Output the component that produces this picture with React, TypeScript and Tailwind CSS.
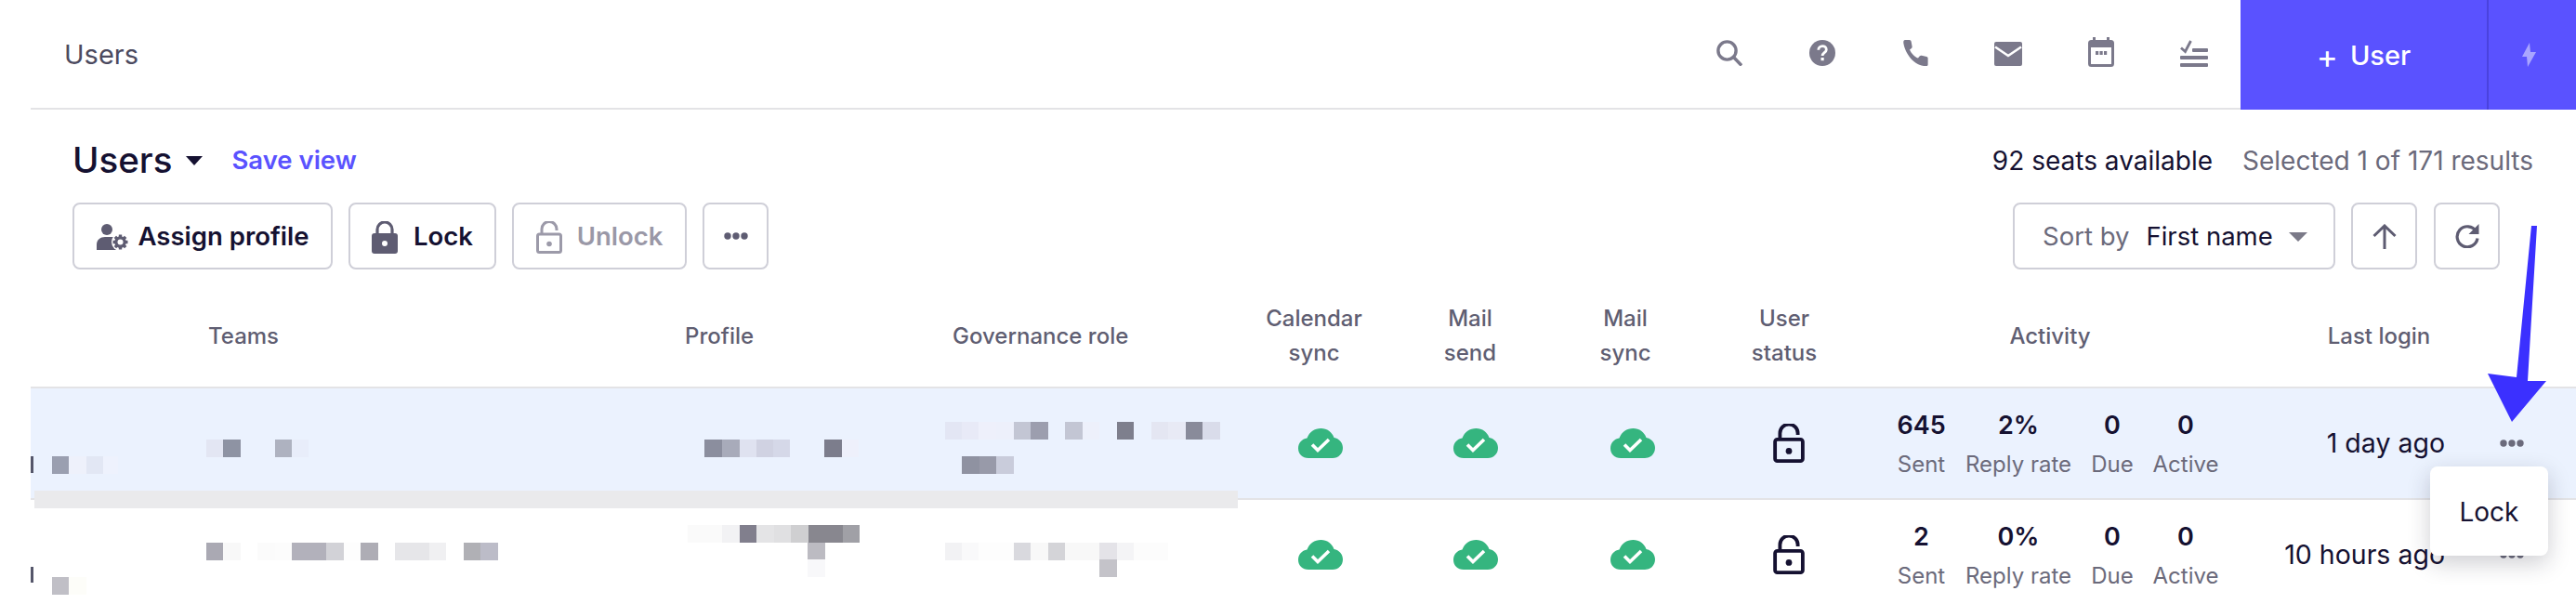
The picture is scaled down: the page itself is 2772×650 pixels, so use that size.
import React from 'react';

type Cell = [number, string];
type Strip = { x: number; y: number; cells: Cell[] };

// blurred-out values, drawn as mosaic strips: [width, colour], transparent = gap
const Mosaic: React.FC<{ strips: Strip[] }> = ({ strips }) => (
  <>
    {strips.map((s, i) => (
      <div key={i} className="absolute flex h-[18.5px]" style={{ left: s.x, top: s.y }}>
        {s.cells.map(([w, c], j) => (
          <div key={j} className="h-full" style={{ width: w, background: c }} />
        ))}
      </div>
    ))}
  </>
);

const row1Strips: Strip[] = [
  { x: 33, y: 491, cells: [[23, 'transparent'], [18, '#9a9fb0'], [19, '#eef1fb'], [18, '#e2e7f4'], [16, '#eef2fd']] },
  { x: 222, y: 473, cells: [[18, '#e3e6f3'], [19, '#8e93a3'], [37, 'transparent'], [18, '#aeb2c0'], [18, '#e8edfa']] },
  { x: 758, y: 473, cells: [[19, '#8b8e9e'], [19, '#a8abba'], [18, '#dfe2f0'], [18, '#d0d2e2'], [18, '#d5d8e8'], [37, 'transparent'], [19, '#7c7d8c'], [18, '#eef0fb']] },
  { x: 1017, y: 454, cells: [[18, '#e3e6f4'], [18, '#e8eaf7'], [19, '#eef0fb'], [19, '#edf0fb'], [18, '#c3c6d4'], [19, '#9c9eae'], [18, 'transparent'], [19, '#c3c6d4'], [18, '#edf0fb'], [19, 'transparent'], [18, '#7e7f8d'], [19, 'transparent'], [18, '#e4e6f2'], [19, '#e8eaf5'], [18, '#898b9a'], [19, '#d9dcea']] },
  { x: 1035, y: 491, cells: [[19, '#8f92a1'], [18, '#989aa9'], [19, '#c9ccdb']] },
];

const row2Strips: Strip[] = [
  { x: 33, y: 621, cells: [[23, 'transparent'], [18, '#c0bfc6'], [19, '#fdfdf9']] },
  { x: 222, y: 584, cells: [[18, '#aaa9b3'], [19, '#f8f8f8'], [18, 'transparent'], [19, '#fbfbfb'], [18, '#fcfcfc'], [37, '#b2b1bb'], [19, '#d2d2d7'], [18, '#fdfdfd'], [19, '#aeadb5'], [18, 'transparent'], [37, '#e6e6e9'], [18, '#f0f0f2'], [19, 'transparent'], [18, '#b0b0b5'], [19, '#bcbcc8']] },
  { x: 740, y: 565, cells: [[37, '#fafafa'], [19, '#f2f2f4'], [18, '#817f8d'], [19, '#e4e4e6'], [18, '#e0e0e2'], [19, '#cfcfd1'], [37, '#88878f'], [18, '#a0a0a6']] },
  { x: 869, y: 584, cells: [[19, '#bcbbc2']] },
  { x: 869, y: 602, cells: [[19, '#f8f8fa']] },
  { x: 1017, y: 584, cells: [[18, '#f2f2f4'], [18, '#f9f9fa'], [38, '#fdfdfd'], [18, '#d9d9de'], [19, '#f8f8f8'], [18, '#d4d4d8'], [37, '#f8f8f8'], [19, '#e4e3e8'], [18, '#f4f4f6'], [37, '#fcfcfc']] },
  { x: 1183, y: 602, cells: [[19, '#c4c3c9']] },
];

const SearchIcon = () => (
  <svg width="28" height="28" viewBox="0 0 28 28" fill="none" stroke="#7b798b" strokeWidth="3.4">
    <circle cx="11.5" cy="11.5" r="9.6" />
    <path d="M18.5 18.5 27 27.5" />
  </svg>
);

const HelpIcon = () => (
  <svg width="28" height="28" viewBox="0 0 28 28" fill="none">
    <circle cx="14" cy="14" r="14" fill="#7b798b" />
    <path d="M9.8 10.8c0-2.6 1.9-4.2 4.3-4.2s4.2 1.5 4.2 3.8c0 3.2-4.2 3.4-4.2 6.6" stroke="#fff" strokeWidth="2.8" />
    <rect x="12.5" y="19" width="3.2" height="3.2" fill="#fff" />
  </svg>
);

const PhoneIcon = () => (
  <svg width="28" height="28" viewBox="0 0 28 28" fill="#7b798b">
    <path d="M3 0h4.6c1.3 0 1.9.8 2.1 2l.9 5c.2 1-.2 1.6-1 2.2L8 10.4c1.5 3.6 5 7.6 9 9.2l1.6-2c.7-.8 1.4-1 2.3-.8l5.2 1.2c1.2.3 1.5 1 1.5 2.1V26.500c0 1-.8 1.500-1.800 1.500C12 28 3 14 1.300 3.200 1.100 1.200 1.800 0 3 0z" />
  </svg>
);

const MailIcon = () => (
  <svg width="30" height="26" viewBox="0 0 30 26" fill="none">
    <rect width="30" height="26" rx="2" fill="#7b798b" />
    <path d="M1 5.500 15 15 29 5.500" stroke="#fff" strokeWidth="2.600" />
  </svg>
);

const CalendarIcon = () => (
  <svg width="28" height="32" viewBox="0 0 28 32" fill="none">
    <rect x="1.500" y="4.500" width="25" height="26" rx="2" stroke="#7b798b" strokeWidth="3" />
    <rect x="1" y="4" width="26" height="7" fill="#7b798b" />
    <rect x="5" y="0" width="3" height="6" fill="#7b798b" />
    <rect x="20" y="0" width="3" height="6" fill="#7b798b" />
    <rect x="8" y="15" width="3.200" height="4" fill="#7b798b" />
    <rect x="12.500" y="15" width="3.200" height="4" fill="#7b798b" />
    <rect x="17" y="15" width="3.200" height="4" fill="#7b798b" />
  </svg>
);

const TasksIcon = () => (
  <svg width="30" height="29" viewBox="0 0 30 29" fill="none">
    <path d="M1 8.500 5.500 12.500 11.500 1" stroke="#7b798b" strokeWidth="2.800" />
    <rect x="13" y="9" width="17" height="4" rx="1" fill="#7b798b" />
    <rect y="17" width="30" height="4" rx="1" fill="#7b798b" />
    <rect y="25" width="30" height="4" rx="1" fill="#7b798b" />
  </svg>
);

const BoltIcon = () => (
  <svg width="15" height="26" viewBox="0 0 15 26">
    <path d="M8 0 0 15h5l1 11 9-16H9z" fill="#a9a5ff" />
  </svg>
);

const AssignProfileIcon = () => (
  <svg width="35" height="28" viewBox="0 0 35 28" fill="#5e5c72">
    <circle cx="11" cy="6" r="6" />
    <path d="M0 28v-6c0-5 4-8 9-8h6c4 0 7 2 8 5v9z" />
    <circle cx="25.500" cy="19.500" r="9.500" fill="#fff" />
    {[0, 45, 90, 135].map(a => (
      <rect key={a} x="23.800" y="11.500" width="3.400" height="16" transform={`rotate(${a} 25.500 19.500)`} />
    ))}
    <circle cx="25.500" cy="19.500" r="5" fill="none" stroke="#5e5c72" strokeWidth="2.600" />
    <circle cx="25.500" cy="19.500" r="3" fill="#fff" />
  </svg>
);

const LockClosedIcon = () => (
  <svg width="28" height="35" viewBox="0 0 28 35" fill="none">
    <path d="M6 15V9a8 8 0 0 1 16 0v6" stroke="#5e5c72" strokeWidth="3.200" />
    <rect y="13" width="28" height="22" rx="3" fill="#5e5c72" />
    <circle cx="14" cy="24" r="3" fill="#fff" />
  </svg>
);

const LockOpenIcon: React.FC<{ color: string; w: number; h: number; sw: number }> = ({ color, w, h, sw }) => (
  <svg width={w} height={h} viewBox="0 0 28 35" fill="none">
    <path d="M6 13V8.500a8 8 0 0 1 16 0V10" stroke={color} strokeWidth={sw} />
    <rect x={sw / 2} y="14" width={28 - sw} height={21 - sw / 2} rx="2" stroke={color} strokeWidth={sw} />
    <circle cx="14" cy="24.500" r="2.800" fill={color} />
  </svg>
);

const Dots: React.FC<{ color: string }> = ({ color }) => (
  <svg width="26" height="8" viewBox="0 0 26 8" fill={color}>
    <circle cx="4" cy="4" r="3.700" />
    <circle cx="13" cy="4" r="3.700" />
    <circle cx="22" cy="4" r="3.700" />
  </svg>
);

const CloudCheck = () => (
  <svg width="48" height="32" viewBox="0 0 48 32">
    <path d="M11 32C4.500 32 0 27.500 0 21.500 0 16 3.800 11.500 9.500 10.500 12 4 17.500 0 24.500 0 31 0 36.500 4 38.500 10c5.500 1 9.500 5.500 9.500 11 0 6.300-4.700 11-11 11z" fill="#35b57f" />
    <path d="M15 17.500 21 23.500 33 12" fill="none" stroke="#fff" strokeWidth="3.600" />
  </svg>
);

const UpArrowIcon = () => (
  <svg width="26" height="27" viewBox="0 0 26 27" fill="none" stroke="#5e5c72" strokeWidth="3">
    <path d="M13 27V2M1.500 13 13 2l11.500 11" />
  </svg>
);

const RefreshIcon = () => (
  <svg width="28" height="26" viewBox="0 0 28 26" fill="none">
    <path d="M23.500 8A11 11 0 1 0 25 15.500" stroke="#5e5c72" strokeWidth="3.200" />
    <path d="M26.500 0v11h-11z" fill="#5e5c72" />
  </svg>
);

const ToolButton: React.FC<{ className: string; children: React.ReactNode }> = ({ className, children }) => (
  <button className={`flex h-[72px] items-center rounded-lg border-2 border-[#cfcfd8] bg-white ${className}`}>
    {children}
  </button>
);

const Stat: React.FC<{ value: string; label: string; w: string }> = ({ value, label, w }) => (
  <div className={`flex flex-col items-center gap-[15px] pt-[3px] ${w}`}>
    <span className="text-[27px] leading-[27px] font-semibold text-[#151131]">{value}</span>
    <span className="text-[24px] leading-[27px] whitespace-nowrap text-[#6b6a7b]">{label}</span>
  </div>
);

const UserRow: React.FC<{ stats: string[]; login: string; selected?: boolean }> = ({ stats, login, selected }) => (
  <div className={`grid h-[118px] grid-cols-[1305px_166px_168px_170px_166px_392px_231px_1fr] items-center ${selected ? 'bg-[#ebf2fe]' : 'bg-white'}`}>
    <div />
    <div className="flex justify-center"><CloudCheck /></div>
    <div className="flex justify-center"><CloudCheck /></div>
    <div className="flex justify-center"><CloudCheck /></div>
    <div className="flex justify-center"><LockOpenIcon color="#151131" w={34} h={42} sw={3.2} /></div>
    <div className="flex gap-[22px] pl-[34px]">
      <Stat value={stats[0]} label="Sent" w="w-[51px]" />
      <Stat value={stats[1]} label="Reply rate" w="w-[114px]" />
      <Stat value={stats[2]} label="Due" w="w-[44px]" />
      <Stat value={stats[3]} label="Active" w="w-[70px]" />
    </div>
    <div className="text-right text-[28.5px] whitespace-nowrap text-[#151131]">{login}</div>
    <div className="pl-[59px]"><Dots color="#6b6a7b" /></div>
  </div>
);

export default function App() {
  return (
    <div className="relative h-[650px] w-[2772px] overflow-hidden bg-white font-['Inter',sans-serif]">
      {/* top bar */}
      <div className="flex h-[118px] pl-[33px]">
        <div className="flex flex-1 items-center justify-between border-b-2 border-[#e3e3e6] pl-[36px]">
          <span className="pt-[2px] text-[29px] text-[#4c4a5f]">Users</span>
          <div className="flex self-start pt-[40px]">
            <div className="flex w-[100px] justify-center pt-[3px]"><SearchIcon /></div>
            <div className="flex w-[100px] justify-center pt-[3px]"><HelpIcon /></div>
            <div className="flex w-[100px] justify-center pt-[3px]"><PhoneIcon /></div>
            <div className="flex w-[100px] justify-center pt-[5px]"><MailIcon /></div>
            <div className="flex w-[100px] justify-center"><CalendarIcon /></div>
            <div className="flex w-[100px] justify-center pt-[3px]"><TasksIcon /></div>
          </div>
        </div>
        <div className="flex w-[361px] bg-[#5a52ff]">
          <button className="flex w-[265px] items-center justify-center gap-[13px] pt-[2px] text-[29px] font-medium text-white">
            <span className="text-[35px] leading-none font-normal">+</span>
            <span>User</span>
          </button>
          <div className="flex flex-1 items-center justify-center border-l-2 border-[#4a42de] pr-[8px]"><BoltIcon /></div>
        </div>
      </div>

      {/* title and toolbar */}
      <div className="pt-[35px] pr-[46px] pl-[78px]">
        <div className="flex h-[40px] items-center">
          <h1 className="text-[38.5px] font-medium text-[#151131]">Users</h1>
          <div className="ml-[15px] h-0 w-0 border-x-[9px] border-t-[10px] border-x-transparent border-t-[#151131]" />
          <a className="ml-[31px] text-[27.5px] font-semibold text-[#5a52ff]">Save view</a>
          <span className="ml-auto text-[28px] text-[#151131]">92 seats available</span>
          <span className="ml-[32px] text-[28px] text-[#6b6a7b]">Selected 1 of 171 results</span>
        </div>
        <div className="mt-[25px] flex pr-[36px]">
          <ToolButton className="w-[280px] justify-center gap-[10px] pt-[2px] text-[27.5px] font-semibold text-[#151131]">
            <AssignProfileIcon />
            Assign profile
          </ToolButton>
          <ToolButton className="ml-[17px] w-[159px] justify-center gap-[17px] pt-[2px] text-[27.5px] font-semibold text-[#151131]">
            <LockClosedIcon />
            Lock
          </ToolButton>
          <ToolButton className="ml-[17px] w-[188px] justify-center gap-[16px] pt-[2px] text-[27.5px] font-semibold text-[#9a98a7]">
            <LockOpenIcon color="#9c9aa9" w={28} h={35} sw={3} />
            Unlock
          </ToolButton>
          <ToolButton className="ml-[17px] w-[71px] justify-center"><Dots color="#5e5c72" /></ToolButton>
          <ToolButton className="ml-auto w-[347px] pt-[2px] pl-[30px] text-[27.5px]">
            <span className="text-[#6b6a7b]">Sort by</span>
            <span className="ml-[18px] text-[#151131]">First name</span>
            <span className="ml-[17px] h-0 w-0 border-x-[10px] border-t-[10px] border-x-transparent border-t-[#7b7a88]" />
          </ToolButton>
          <ToolButton className="ml-[17px] w-[71px] justify-center"><UpArrowIcon /></ToolButton>
          <ToolButton className="ml-[18px] w-[71px] justify-center"><RefreshIcon /></ToolButton>
        </div>
      </div>

      {/* table */}
      <div className="ml-[33px]">
        <div className="grid h-[128px] grid-cols-[191px_513px_288px_306px_166px_170px_164px_178px_394px_314px_1fr] items-center border-b-2 border-[#e3e3e6] pt-[16px] text-center text-[24px] leading-[37px] font-medium text-[#5f5e72]">
          <div />
          <div className="text-left">Teams</div>
          <div className="text-left">Profile</div>
          <div className="text-left">Governance role</div>
          <div>Calendar<br />sync</div>
          <div>Mail<br />send</div>
          <div>Mail<br />sync</div>
          <div>User<br />status</div>
          <div>Activity</div>
          <div>Last login</div>
        </div>
        <div className="border-b-2 border-[#e3e3e6]">
          <UserRow stats={['645', '2%', '0', '0']} login="1 day ago" selected />
        </div>
        <UserRow stats={['2', '0%', '0', '0']} login="10 hours ago" />
      </div>

      <Mosaic strips={row1Strips} />
      <Mosaic strips={row2Strips} />

      {/* clipped names at the table's left edge */}
      <div className="absolute top-[491px] left-[33px] h-[18px] w-[3px] bg-[#55566a]" />
      <div className="absolute top-[610px] left-[33px] h-[17px] w-[3px] bg-[#55566a]" />

      {/* scroll artifact over the first row */}
      <div className="absolute top-[528px] left-[37px] h-[19px] w-[1295px] bg-[#eaeaec]" />

      {/* row menu */}
      <div className="absolute top-[502px] left-[2615px] flex h-[96px] w-[127px] items-center justify-center rounded-lg bg-white pt-[2px] text-[28px] text-[#151131] shadow-[0_8px_24px_rgba(30,30,50,0.22)]">
        Lock
      </div>

      {/* annotation arrow */}
      <svg className="absolute top-[240px] left-[2670px]" width="80" height="220" viewBox="0 0 80 220">
        <path d="M54 3h6L50 170l20 0-37 44L7 162l31 4z" fill="#3b30ff" />
      </svg>
    </div>
  );
}
